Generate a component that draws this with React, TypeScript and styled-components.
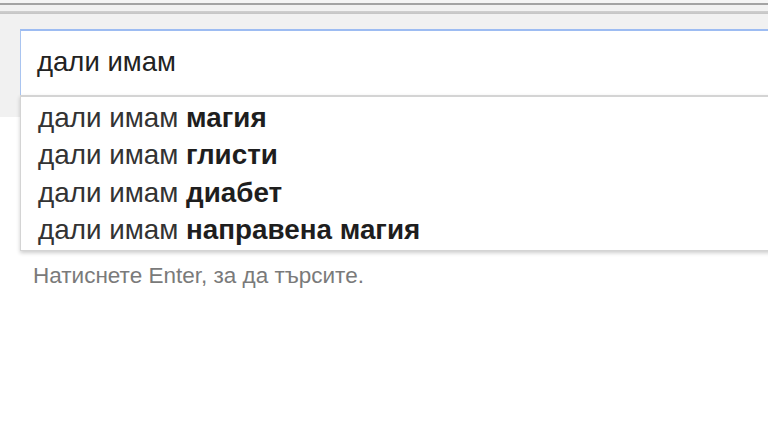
import React from "react";
import styled, { createGlobalStyle } from "styled-components";

const Global = createGlobalStyle`
  html, body { margin: 0; padding: 0; background: #fff; overflow: hidden; }
  body { width: 768px; height: 432px; font-family: "Liberation Sans", Arial, sans-serif; }
`;

const Page = styled.div`
  position: relative;
  width: 768px;
  height: 432px;
  overflow: hidden;
`;

const TopBar = styled.div`
  height: 14px;
  background: linear-gradient(
    to bottom,
    #f5f5f5 0px, #f5f5f5 3px,
    #a4a4a4 3px, #a4a4a4 5px,
    #f2f2f2 5px, #f2f2f2 11px,
    #cfcfcf 11px, #c4c4c4 14px
  );
`;

const Header = styled.div`
  height: 103px;
  background: #f1f1f1;
  padding: 15px 0 0 20px;
  box-sizing: border-box;
  position: relative;
`;

const SearchWrap = styled.div`
  position: relative;
  width: 800px;
`;

const SearchBox = styled.div`
  height: 67px;
  box-sizing: border-box;
  background: #fff;
  border-top: 2px solid #9dbcf2;
  border-left: 1px solid #a9c4f0;
  display: flex;
  align-items: center;
  padding-left: 16px;
  padding-bottom: 3px;
  font-size: 27.5px;
  color: #222;
`;

const Dropdown = styled.ul`
  position: absolute;
  top: 66px;
  left: 0;
  width: 800px;
  margin: 0;
  padding: 2px 0 1px;
  list-style: none;
  background: #fff;
  border: 1px solid #d4d4d4;
  border-top-width: 2px;
  box-sizing: border-box;
  box-shadow: 0 2px 4px rgba(0, 0, 0, 0.2);
  z-index: 2;
`;

const Row = styled.li`
  height: 37.5px;
  display: flex;
  align-items: center;
  padding-left: 17px;
  font-size: 27.8px;
  color: #333;
  white-space: nowrap;
`;

const Strong = styled.b`
  font-weight: 700;
  color: #1e1e1e;
`;

const Hint = styled.div`
  padding: 146px 0 0 33px;
  font-size: 22.5px;
  color: #7a7a7a;
`;

const suggestions = ["магия", "глисти", "диабет", "направена магия"];

export default function App() {
  return (
    <Page>
      <Global />
      <TopBar />
      <Header>
        <SearchWrap>
          <SearchBox>дали имам</SearchBox>
          <Dropdown>
            {suggestions.map((s) => (
              <Row key={s}>
                дали имам&nbsp;<Strong>{s}</Strong>
              </Row>
            ))}
          </Dropdown>
        </SearchWrap>
      </Header>
      <Hint>Натиснете Enter, за да търсите.</Hint>
    </Page>
  );
}
